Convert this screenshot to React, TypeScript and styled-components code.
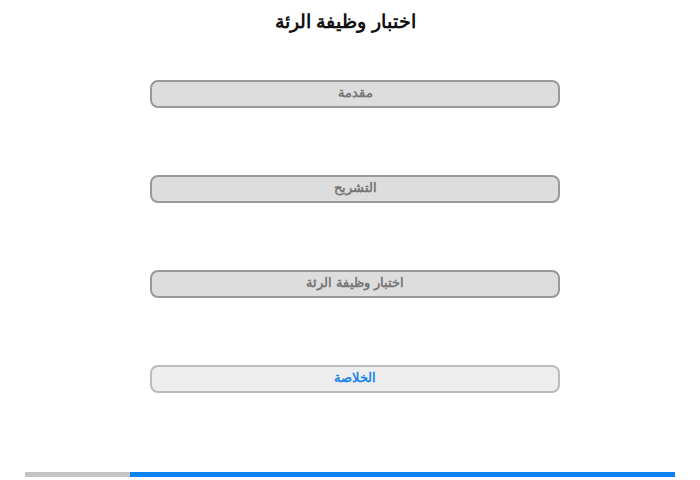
import React from 'react'
import styled, { createGlobalStyle } from 'styled-components'

const GlobalStyle = createGlobalStyle`
  html, body {
    margin: 0;
    padding: 0;
    background: #ffffff;
    font-family: 'Liberation Sans', Arial, sans-serif;
  }
`

const Page = styled.div`
  width: 700px;
  height: 480px;
  display: flex;
  flex-direction: column;
  align-items: center;
  direction: rtl;
`

const Title = styled.h1`
  margin: 11px 9px 0 0;
  font-size: 19px;
  line-height: 22px;
  font-weight: bold;
  color: #111;
`

const Menu = styled.div`
  display: flex;
  flex-direction: column;
  gap: 67px;
  margin-top: 47px;
  margin-left: 10px;
`

const MenuButton = styled.button<{ active?: boolean }>`
  width: 410px;
  height: 28px;
  box-sizing: border-box;
  border-radius: 8px;
  border: 2px solid ${(p) => (p.active ? '#bbbbbb' : '#999999')};
  background: ${(p) => (p.active ? '#eeeeee' : '#dddddd')};
  color: ${(p) => (p.active ? '#1e87f0' : '#777777')};
  font-family: 'Liberation Sans', Arial, sans-serif;
  font-size: 13px;
  font-weight: bold;
  padding: 0 0 3px 0;
  direction: rtl;
  cursor: pointer;
`

const Progress = styled.div`
  margin-top: auto;
  margin-bottom: 3px;
  width: 650px;
  height: 5px;
  display: flex;
  direction: ltr;
  background: #0a84f5;
`

const ProgressDone = styled.div<{ width: number }>`
  width: ${(p) => p.width}px;
  background: #c4c4c4;
`

const items = [
  { label: 'مقدمة' },
  { label: 'التشريح' },
  { label: 'اختبار وظيفة الرئة' },
  { label: 'الخلاصة', active: true },
]

const App = () => {
  return (
    <>
      <GlobalStyle />
      <Page>
        <Title>اختبار وظيفة الرئة</Title>
        <Menu>
          {items.map((it) => (
            <MenuButton key={it.label} active={it.active}>
              {it.label}
            </MenuButton>
          ))}
        </Menu>
        <Progress>
          <ProgressDone width={105} />
        </Progress>
      </Page>
    </>
  )
}

export default App
